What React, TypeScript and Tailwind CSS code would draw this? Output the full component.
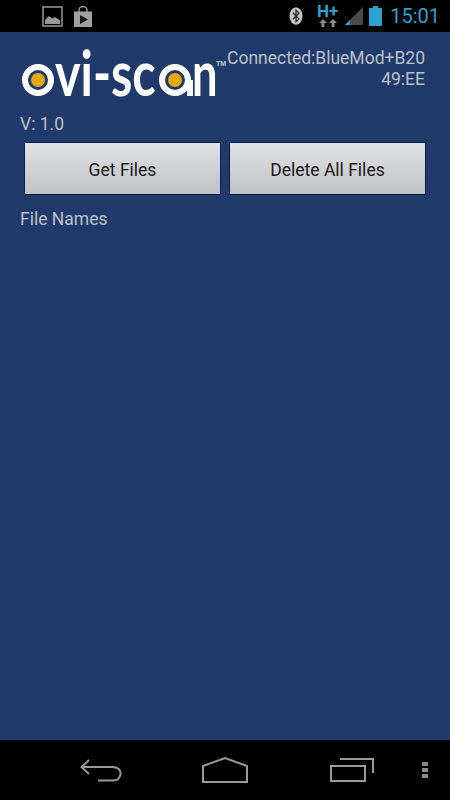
import React from 'react';

const StatusBar: React.FC = () => (
  <div className="flex h-[32px] shrink-0 items-center bg-black pl-[42px] pr-[10px]">
    <svg width="21" height="21" viewBox="0 0 21 21" className="shrink-0">
      <rect x="1" y="1" width="19" height="19" fill="none" stroke="#8f8f8f" strokeWidth="1.6" />
      <path d="M3 18 V14 L7 10 L10 12.5 L13 11 L18 14.5 V18 Z" fill="#9a9a9a" />
    </svg>
    <svg width="20" height="22" viewBox="0 0 20 22" className="ml-[10px] shrink-0">
      <path d="M6 8 V5 a4 3.5 0 0 1 8 0 V8" fill="none" stroke="#9a9a9a" strokeWidth="1.4" />
      <path d="M1 6.5 H19 V22 H1 Z" fill="#a0a0a0" />
      <path d="M7 10 L15 14.5 L7 19 Z" fill="#141414" />
    </svg>
    <div className="ml-auto flex items-center">
      <svg width="14" height="18" viewBox="0 0 14 18" className="ml-[1px] shrink-0">
        <ellipse cx="7" cy="9" rx="6.5" ry="8.8" fill="#c4c4c4" />
        <path d="M3.8 5.8 L10 11.8 L7 14.8 V3.2 L10 6.2 L3.8 12.2" fill="none" stroke="#222" strokeWidth="1.2" />
      </svg>
      <div className="ml-[14px] flex w-[21px] flex-col items-center">
        <span className="text-[17px] font-bold leading-[13px] text-[#2ba3d0] [font-family:Roboto,sans-serif]">H+</span>
        <svg width="20" height="8" viewBox="0 0 20 8" className="mt-[1px]">
          <path d="M1 4 L5 0 L9 4 H6.5 V8 H3.5 V4 Z M11 4 L15 0 L19 4 H16.5 V8 H13.5 V4 Z" fill="#8a8a8a" />
        </svg>
      </div>
      <svg width="18" height="18" viewBox="0 0 18 18" className="ml-[7px] shrink-0">
        <path d="M18 0 V18 H0 Z" fill="#4a4a4a" />
        <path d="M5 13 V18 H0 Z" fill="#2ba3d0" />
      </svg>
      <svg width="13" height="20" viewBox="0 0 13 20" className="ml-[6px] shrink-0">
        <path d="M4 0 H9 V2 H13 V20 H0 V2 H4 Z" fill="#2ba3d0" />
      </svg>
      <span className="ml-[8px] text-[20px] leading-none text-[#2ba3d0] [font-family:Roboto,sans-serif]">15:01</span>
    </div>
  </div>
);

// o and a bowls of the logo: white ring round a yellow dot
const LogoRing: React.FC = () => (
  <span className="flex h-[32px] w-[32px] shrink-0 items-center justify-center rounded-full border-[6px] border-white">
    <span className="h-[14px] w-[14px] rounded-full bg-[#e5a90f]" />
  </span>
);

const Logo: React.FC = () => (
  <div className="relative flex h-[32px] w-[196px] shrink-0 items-end whitespace-nowrap text-[63px] leading-[32px] font-bold text-white [font-family:Lato,sans-serif]">
    <LogoRing />
    <span className="mb-[8px] ml-[1px] w-[104px] origin-left scale-x-[0.77]">vi-sc</span>
    <span className="relative flex shrink-0">
      <LogoRing />
      <span className="absolute right-[-2px] bottom-0 h-[16px] w-[6px] bg-white" />
    </span>
    <span className="mb-[8px] ml-[1px] w-[24px] origin-left scale-x-[0.72]">n</span>
    <span className="absolute top-[-4px] left-[194px] text-[7px] leading-[8px] font-bold text-[#c9ccd2] [font-family:'Liberation_Sans',sans-serif]">TM</span>
  </div>
);

const ActionButton: React.FC<{ label: string }> = ({ label }) => (
  <button className="h-[53px] flex-1 rounded-[2px] border border-[#0b1c4f] border-b-[#0d1b3d] bg-gradient-to-b from-[#e1e2e6] to-[#c0c1c5] pt-[4px] text-[17.5px] text-[#1a1a1a] [font-family:Roboto,sans-serif]">
    {label}
  </button>
);

const NavBar: React.FC = () => (
  <div className="flex h-[60px] shrink-0 items-center bg-black pl-[80px] pr-[22px]">
    <svg width="42" height="24" viewBox="0 0 42 24" fill="none" stroke="#9a9a9a" strokeWidth="2" className="shrink-0">
      <path d="M9 2 L1.5 9 L9 16 M2 9 H32 C38 9 41 12 40.5 16 C40 20 37 22.5 33 22.5 H18" />
    </svg>
    <svg width="46" height="26" viewBox="0 0 46 26" fill="none" stroke="#9a9a9a" strokeWidth="2" className="ml-[80px] shrink-0">
      <path d="M1 9 L23 1 L45 9 V25 H1 Z" />
    </svg>
    <svg width="44" height="24" viewBox="0 0 44 24" fill="none" stroke="#9a9a9a" strokeWidth="2" className="ml-[82px] shrink-0">
      <path d="M1 8 H35 V23 H1 Z M10 1 H43 V15" />
    </svg>
    <div className="ml-auto flex flex-col gap-[2px]">
      <span className="h-[4px] w-[6px] bg-[#8a8a8a]" />
      <span className="h-[4px] w-[6px] bg-[#8a8a8a]" />
      <span className="h-[4px] w-[6px] bg-[#8a8a8a]" />
    </div>
  </div>
);

export default function App() {
  return (
    <div className="flex h-[800px] w-[450px] flex-col overflow-hidden bg-[#1f3a6b] [font-family:Roboto,sans-serif]">
      <StatusBar />
      <main className="flex-1 pl-[20px] pr-[24px] pt-[16px] text-[#bcc0c8]">
        <div className="flex items-start justify-between pl-[2px] pr-[1px]">
          <div className="pt-[16px]">
            <Logo />
          </div>
          <p className="text-right text-[17.5px] leading-[21px]">
            Connected:BlueMod+B20
            <br />
            49:EE
          </p>
        </div>
        <p className="mt-[18px] text-[17.5px] leading-[20px]">V: 1.0</p>
        <div className="mt-[8px] flex gap-[8px] pl-[4px]">
          <ActionButton label="Get Files" />
          <ActionButton label="Delete All Files" />
        </div>
        <p className="mt-[14px] text-[17.5px] leading-[20px]">File Names</p>
      </main>
      <NavBar />
    </div>
  );
}
